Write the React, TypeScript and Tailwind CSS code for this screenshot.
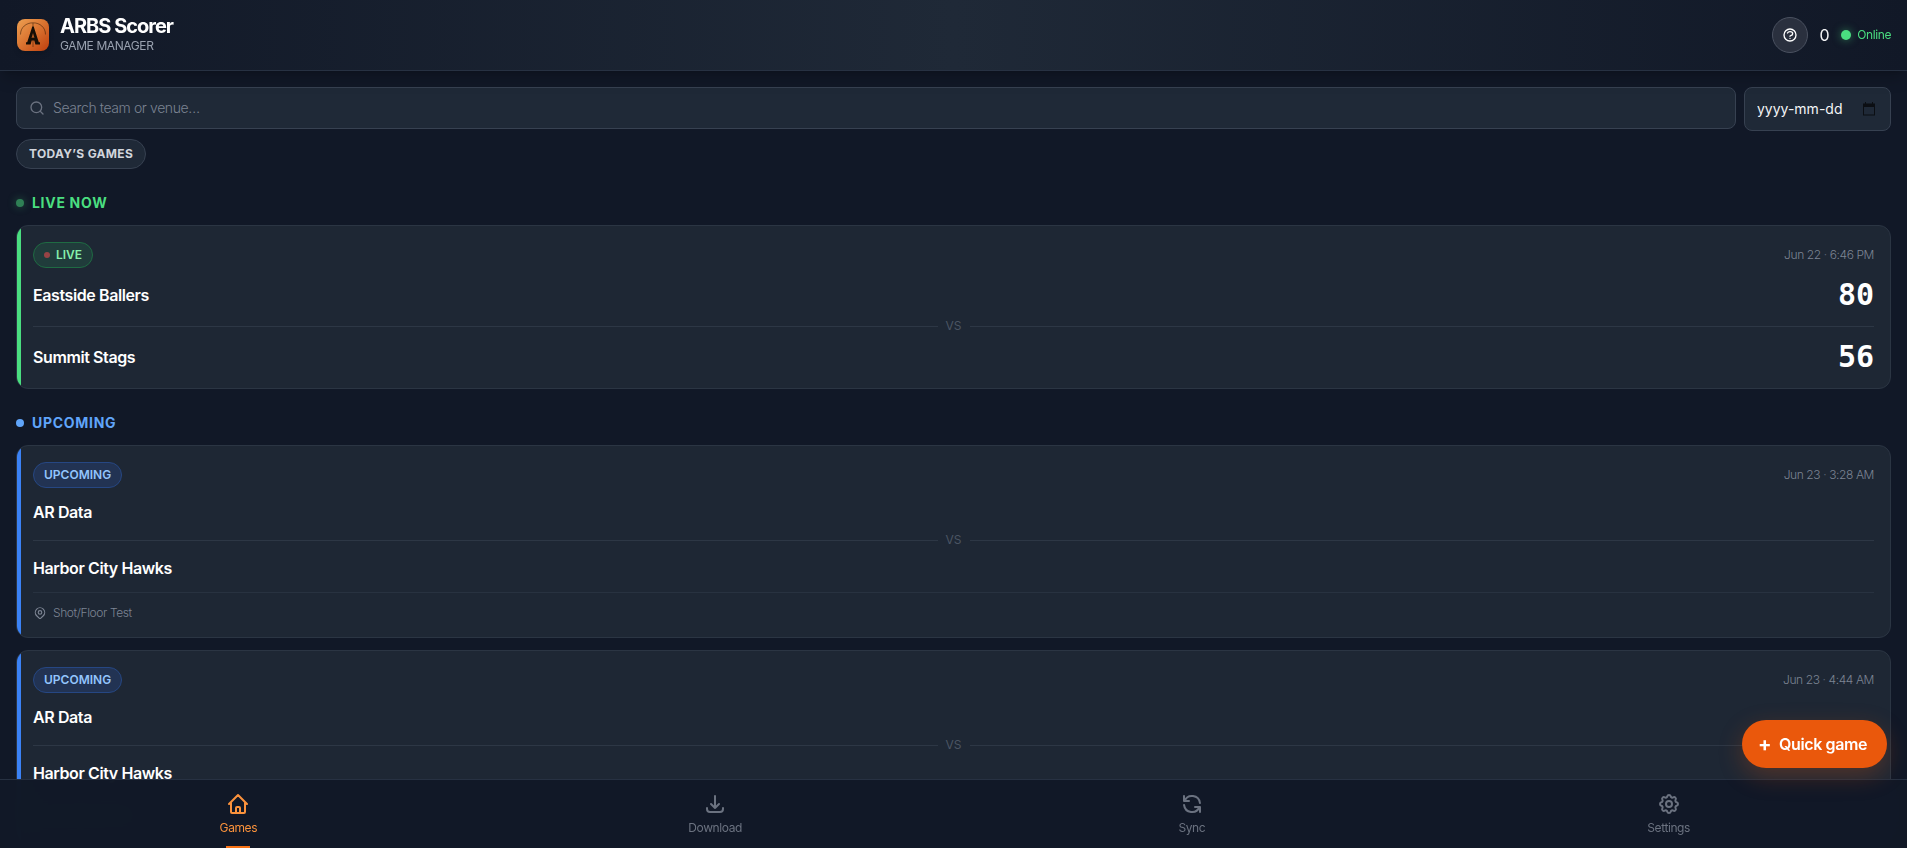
import { useState } from "react";
import type { IconType } from "react-icons";
import {
  HiOutlineCog,
  HiOutlineDownload,
  HiOutlineHome,
  HiOutlineLocationMarker,
  HiOutlineQuestionMarkCircle,
  HiOutlineRefresh,
} from "react-icons/hi";
import { Search } from "lucide-react";

type Game = {
  id: string;
  status: "live" | "upcoming";
  date: string;
  time: string;
  home: string;
  away: string;
  scores?: [number, number];
  venue?: string;
};

const liveGames: Game[] = [
  { id: "g1", status: "live", date: "Jun 22", time: "6:46 PM", home: "Eastside Ballers", away: "Summit Stags", scores: [80, 56] },
];

const upcomingGames: Game[] = [
  { id: "g2", status: "upcoming", date: "Jun 23", time: "3:28 AM", home: "AR Data", away: "Harbor City Hawks", venue: "Shot/Floor Test" },
  { id: "g3", status: "upcoming", date: "Jun 23", time: "4:44 AM", home: "AR Data", away: "Harbor City Hawks", venue: "Shot/Floor Test" },
];

const navItems: { label: string; icon: IconType }[] = [
  { label: "Games", icon: HiOutlineHome },
  { label: "Download", icon: HiOutlineDownload },
  { label: "Sync", icon: HiOutlineRefresh },
  { label: "Settings", icon: HiOutlineCog },
];

function Logo() {
  return (
    <svg viewBox="0 0 32 32" className="size-8 rounded-lg shadow-md" aria-hidden="true">
      <defs>
        <linearGradient id="logo-fill" x1="0" y1="0" x2="1" y2="1">
          <stop offset="0" stopColor="#eda052" />
          <stop offset="0.5" stopColor="#d9722f" />
          <stop offset="1" stopColor="#bf3f0e" />
        </linearGradient>
      </defs>
      <rect width="32" height="32" fill="url(#logo-fill)" />
      <path d="M3.500 15.500C3.500 8.500 9 3.800 16 3.800S28.500 8.500 28.500 15.500M16 4v24" fill="none" stroke="#3a1d08" strokeOpacity="0.55" strokeWidth="1" />
      <path d="M15.300 7.500h1.400L21.800 23.200H23v2.200h-4.600l-1.100-3.800h-2.600l-1.100 3.800H9v-2.200h1.200zM16 14l-1.400 4.800h2.800z" fill="#150e06" fillRule="evenodd" />
    </svg>
  );
}

function CalendarGlyph() {
  return (
    <svg viewBox="0 0 14 14" className="size-3.5" aria-hidden="true">
      <path d="M3 0h1v1.500h6V0h1v1.500h2v12H1v-12h2zM2 5v7.500h10V5z" fill="#0b0e13" fillRule="evenodd" />
    </svg>
  );
}

function DateField() {
  const [value, setValue] = useState("");
  const [editing, setEditing] = useState(false);
  return (
    <label className="flex h-11 w-[147px] shrink-0 items-center justify-between rounded-lg border border-[#374151] bg-[#1f2937] pr-3.5 pl-3">
      <input
        type={editing ? "date" : "text"}
        aria-label="Game date"
        placeholder="yyyy-mm-dd"
        value={value}
        onFocus={() => setEditing(true)}
        onBlur={() => setEditing(false)}
        onChange={(e) => setValue(e.target.value)}
        className="w-24 min-w-0 bg-transparent text-sm leading-5 tracking-normal text-gray-100 outline-none placeholder:text-gray-100"
      />
      <CalendarGlyph />
    </label>
  );
}

function SectionHeading({ live, children }: { live?: boolean; children: string }) {
  return (
    <h2
      className={
        live
          ? "flex items-center gap-2 text-sm leading-5 font-bold tracking-wider text-[#4ade80]"
          : "flex items-center gap-2 text-sm leading-5 font-bold tracking-wider text-[#60a5fa]"
      }
    >
      <span
        className={
          live
            ? "size-2 rounded-full bg-[#2f8055] shadow-[0_0_8px_rgba(74,222,128,0.35)]"
            : "size-2 rounded-full bg-[#60a5fa]"
        }
      />
      {children}
    </h2>
  );
}

function TeamRow({ name, score }: { name: string; score?: number }) {
  return (
    <div className="flex items-center justify-between">
      <span className="text-base leading-8 font-semibold text-white">{name}</span>
      {score !== undefined && (
        <span className="font-['DejaVu_Sans_Mono',monospace] text-3xl leading-[38px] font-bold tracking-normal text-white">
          {score}
        </span>
      )}
    </div>
  );
}

function GameCard({ game }: { game: Game }) {
  const live = game.status === "live";
  return (
    <article className="flex overflow-hidden rounded-xl border border-[#2b3543] bg-[#1e2734]">
      <div className={live ? "w-1 shrink-0 bg-[#4ade80]" : "w-1 shrink-0 bg-[#3b82f6]"} />
      <div className={live ? "min-w-0 grow pt-4 pr-4 pb-3 pl-3" : "min-w-0 grow py-4 pr-4 pl-3"}>
        <div className="flex items-center justify-between">
          {live ? (
            <span className="flex items-center gap-1.5 rounded-full border border-[#1f6b43] bg-[#203c3b] px-2.5 py-1 text-xs leading-4 font-semibold tracking-normal text-[#86efac]">
              <span className="size-1.5 rounded-full bg-[#974345]" />
              LIVE
            </span>
          ) : (
            <span className="rounded-full border border-[#264783] bg-[#223353] px-2.5 py-1 text-xs leading-4 font-semibold tracking-normal text-[#93c5fd]">
              UPCOMING
            </span>
          )}
          <time className="text-xs leading-4 font-light text-[#7c8493]">
            {game.date} <span className="text-[#5b6575]">·</span> {game.time}
          </time>
        </div>
        <div className="mt-2">
          <TeamRow name={game.home} score={game.scores?.[0]} />
          <div className="flex items-center gap-2 py-1 text-xs leading-4 tracking-normal text-[#4b5563]">
            <span className="h-px grow bg-[#2d3745]" />
            VS
            <span className="h-px grow bg-[#2d3745]" />
          </div>
          <TeamRow name={game.away} score={game.scores?.[1]} />
        </div>
        {game.venue && (
          <div className="mt-2 flex items-center gap-1.5 border-t border-[#283240] pt-3 text-xs leading-4 font-light text-[#7c8493]">
            <HiOutlineLocationMarker className="size-3.5" />
            {game.venue}
          </div>
        )}
      </div>
    </article>
  );
}

export default function App() {
  const [active, setActive] = useState("Games");
  return (
    <div className="h-screen overflow-y-auto bg-[#111827] font-['Inter',sans-serif] tracking-tight text-white [scrollbar-width:none]">
      <header className="sticky top-0 z-10 flex items-center justify-between border-b border-[#273142] bg-linear-to-r from-[#111827] via-[#1f2937] to-[#111827] px-4 py-4 shadow-lg shadow-black/20">
        <div className="flex items-center gap-2.5">
          <div className="p-px">
            <Logo />
          </div>
          <div>
            <h1 className="text-xl leading-5 font-bold tracking-tighter">ARBS Scorer</h1>
            <p className="mt-0.5 text-xs leading-4 text-gray-400">GAME MANAGER</p>
          </div>
        </div>
        <div className="flex items-center gap-3">
          <button
            type="button"
            aria-label="Help"
            className="flex size-9 items-center justify-center rounded-full border border-[#4a5160] bg-[#2a303e] text-white"
          >
            <HiOutlineQuestionMarkCircle className="size-4" />
          </button>
          <span className="text-base leading-6 text-gray-100">0</span>
          <span className="flex items-center gap-1.5 text-xs leading-4 text-[#4ade80]">
            <span className="size-2.5 rounded-full bg-[#4ade80] shadow-[0_0_8px_rgba(74,222,128,0.5)]" />
            Online
          </span>
        </div>
      </header>

      <main className="flex flex-col gap-6 px-4 pt-4 pb-24">
        <div className="flex flex-col items-start gap-2">
          <div className="flex w-full items-start gap-2">
            <label className="flex grow items-center gap-2 rounded-lg border border-[#374151] bg-[#1f2937] px-3 py-2.5">
              <Search className="size-4 text-[#6b7280]" />
              <input
                type="search"
                aria-label="Search games"
                placeholder="Search team or venue…"
                className="h-5 min-w-0 grow bg-transparent text-sm leading-5 font-light text-gray-100 outline-none placeholder:text-[#7a8291]"
              />
            </label>
            <DateField />
          </div>
          <button
            type="button"
            className="rounded-full border border-[#374151] bg-[#1f2937] px-3 py-1.5 text-xs leading-4 font-bold tracking-wide text-gray-300"
          >
            TODAY’S GAMES
          </button>
        </div>

        <section className="flex flex-col gap-3">
          <SectionHeading live>LIVE NOW</SectionHeading>
          {liveGames.map((game) => (
            <GameCard key={game.id} game={game} />
          ))}
        </section>

        <section className="flex flex-col gap-3">
          <SectionHeading>UPCOMING</SectionHeading>
          {upcomingGames.map((game) => (
            <GameCard key={game.id} game={game} />
          ))}
        </section>
      </main>

      <nav className="fixed inset-x-0 bottom-0 z-10 grid grid-cols-4 border-t border-[#273142] bg-[#111827]/98 backdrop-blur-md">
        {navItems.map(({ label, icon: Icon }) => (
          <button
            key={label}
            type="button"
            onClick={() => setActive(label)}
            className={
              active === label
                ? "relative flex flex-col items-center gap-1 py-3 text-xs leading-4 text-[#fb923c]"
                : "relative flex flex-col items-center gap-1 py-3 text-xs leading-4 text-[#6b7280]"
            }
          >
            <Icon className="size-6" />
            {label}
            {active === label && <span className="absolute bottom-0 h-0.5 w-6 bg-[#f97316]" />}
          </button>
        ))}
      </nav>

      <button
        type="button"
        className="fixed right-5 bottom-20 z-20 flex h-12 items-center gap-2 rounded-full bg-[#ea580c] pr-5 pl-4 text-base leading-6 font-semibold text-white shadow-[0_8px_24px_rgba(234,88,12,0.25)]"
      >
        <span className="text-xl leading-5 font-bold">+</span>
        Quick game
      </button>
    </div>
  );
}
